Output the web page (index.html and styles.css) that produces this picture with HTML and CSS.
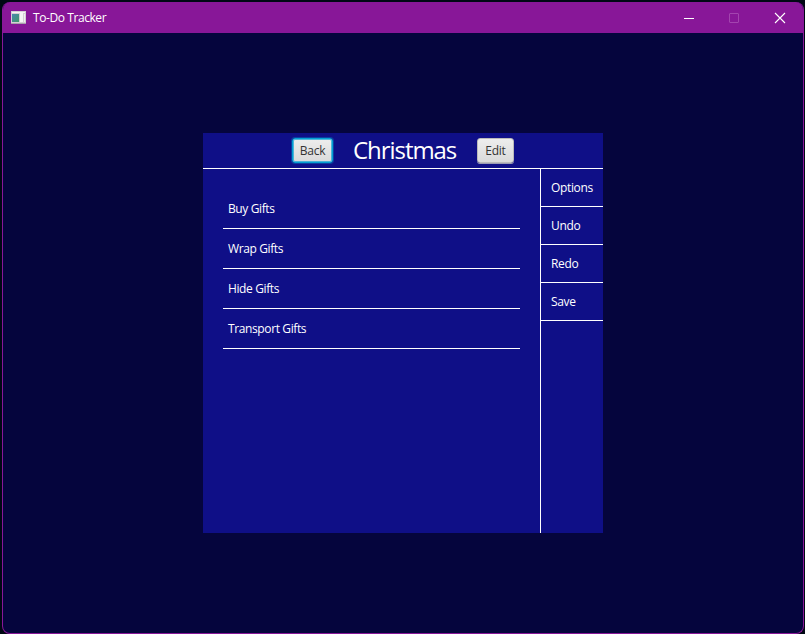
FILE: index.html
```html
<!DOCTYPE html>
<html lang="en">
<head>
<meta charset="utf-8">
<title>To-Do Tracker</title>
<link rel="stylesheet" href="styles.css">
</head>
<body>
<div class="window">
  <header class="titlebar">
    <svg class="app-icon" width="15" height="13" viewBox="0 0 15 13">
      <defs><linearGradient id="pic" x1="0" y1="0" x2="1" y2="1"><stop offset="0" stop-color="#4a86b0"/><stop offset="1" stop-color="#3f9a68"/></linearGradient></defs>
      <rect width="15" height="13" fill="#d4d0d4"/>
      <rect x="1" y="1" width="13" height="1" fill="#f4f4f4"/>
      <rect x="1" y="3" width="7" height="8" fill="url(#pic)"/>
      <rect x="9" y="2" width="3" height="9" fill="#f5f5f5"/>
      <rect x="13" y="3" width="1" height="8" fill="#f0f0f0"/>
      <rect y="12" width="15" height="1" fill="#a9a0ac"/>
    </svg>
    <span class="app-name">To-Do Tracker</span>
    <div class="controls">
      <svg width="46" height="30" viewBox="0 0 46 30"><path d="M19 15.5h10" stroke="#fff"/></svg>
      <svg width="46" height="30" viewBox="0 0 46 30"><rect x="18.5" y="10.5" width="9" height="9" rx=".5" fill="none" stroke="#a344af"/></svg>
      <svg width="46" height="30" viewBox="0 0 46 30"><path d="M18 10l10 10M28 10L18 20" stroke="#fff" stroke-width="1.1"/></svg>
    </div>
  </header>
  <main class="content">
    <section class="panel">
      <div class="heading">
        <button class="button focused">Back</button>
        <h1>Christmas</h1>
        <button class="button">Edit</button>
      </div>
      <div class="body">
        <ul class="tasks">
          <li>Buy Gifts</li>
          <li>Wrap Gifts</li>
          <li>Hide Gifts</li>
          <li>Transport Gifts</li>
        </ul>
        <nav class="menu">
          <a>Options</a>
          <a>Undo</a>
          <a>Redo</a>
          <a>Save</a>
        </nav>
      </div>
    </section>
  </main>
</div>
</body>
</html>
```
FILE: styles.css
```css
* { box-sizing: border-box; }
body {
  margin: 0;
  height: 634px;
  padding: 2px 1px 0 2px;
  overflow: hidden;
  background: #000814;
  color: #fff;
  font: 12px/16px "Open Sans", "Noto Sans", sans-serif;
}
.window {
  height: 632px;
  border: 1px solid #881798;
  border-top: 0;
  border-radius: 8px;
  overflow: hidden;
  background: #05053d;
}
.titlebar {
  display: flex;
  align-items: center;
  height: 31px;
  padding-left: 8px;
  background: #881798;
}
.app-icon { margin-right: 7px; }
.app-name { letter-spacing: -0.42px; }
.controls { display: flex; margin-left: auto; }
.content { padding: 100px 0 0 200px; }
.panel { width: 400px; height: 400px; background: #0f0f87; }
.heading {
  display: flex;
  align-items: center;
  justify-content: center;
  height: 36px;
  border-bottom: 1px solid #fff;
}
h1 {
  width: 104px;
  margin: 0 20px;
  padding-bottom: 2px;
  font-size: 24px;
  font-weight: 400;
  line-height: 33px;
  letter-spacing: -1.05px;
  white-space: nowrap;
}
.button {
  width: 37px;
  height: 25px;
  padding: 0;
  border: 1px solid #bababa;
  border-radius: 3px;
  background: linear-gradient(#ededed, #dadada);
  box-shadow: 0 1px 0 #9c9cb4;
  color: #333;
  font: inherit;
  letter-spacing: -0.25px;
}
.button.focused {
  width: 41px;
  border-color: #039ed3;
  box-shadow: 0 0 0 1px #039ed355, inset 0 0 0 1px #039ed3aa;
}
.body { display: flex; height: 364px; }
.tasks { flex: 1; margin: 0; padding: 20px; list-style: none; }
.tasks li {
  height: 40px;
  padding: 12px 5px 0;
  border-bottom: 1px solid #fff;
  letter-spacing: -0.38px;
}
.menu { width: 63px; border-left: 1px solid #fff; }
.menu a {
  display: block;
  height: 38px;
  padding: 11px 0 0 10px;
  border-bottom: 1px solid #fff;
  letter-spacing: -0.35px;
}
```
